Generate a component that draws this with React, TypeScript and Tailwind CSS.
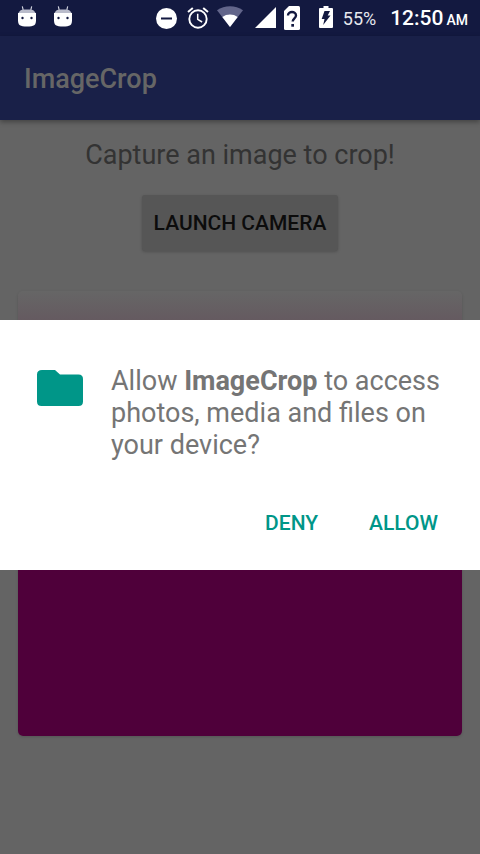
import React from "react";

function AndroidHead() {
  return (
    <svg width="18" height="21" viewBox="0 0 18 21" aria-hidden="true">
      <path d="M4.3 0.3 5.2 4M13.7 0.3 12.8 4" stroke="#d6d8e2" strokeWidth="1.1" fill="none" />
      <path d="M0 7h18v7.5c0 4.5-2 6-9 6s-9-1.500-9-6z" fill="#fff" />
      <path d="M0.500 7C1.500 4.500 3.500 3.500 6 3.500h6c2.500 0 4.500 1 5.500 3.500z" fill="#babccb" />
      <circle cx="4.500" cy="12" r="1.200" fill="#131940" />
      <circle cx="13.500" cy="12" r="1.200" fill="#131940" />
    </svg>
  );
}

function DoNotDisturb() {
  return (
    <svg width="21" height="21" viewBox="0 0 21 21" aria-hidden="true">
      <circle cx="10.500" cy="10.500" r="10.500" fill="#fff" />
      <rect x="5" y="9.500" width="11" height="2" fill="#131940" />
    </svg>
  );
}

function Alarm() {
  return (
    <svg width="22" height="22" viewBox="0 0 22 22" fill="none" stroke="#fff" aria-hidden="true">
      <circle cx="11" cy="12" r="8.700" strokeWidth="1.900" />
      <path d="M10.700 6.700v5.600l4.400 2.700" strokeWidth="1.500" />
      <path d="M1 5 5.800 1M21 5 16.200 1" strokeWidth="2" />
    </svg>
  );
}

function Wifi() {
  return (
    <svg width="26" height="22" viewBox="0 0 26 22" aria-hidden="true">
      <path d="M13 21 0 4.300C7.500-1.100 18.500-1.100 26 4.300z" fill="#62658a" />
      <path d="M13 21 5.300 11C10 7.700 16 7.700 20.700 11z" fill="#fff" />
    </svg>
  );
}

function Signal() {
  return (
    <svg width="21" height="21" viewBox="0 0 21 21" aria-hidden="true">
      <path d="M21 0v21H0z" fill="#fff" />
    </svg>
  );
}

function UnknownSim() {
  return (
    <svg width="16" height="24" viewBox="0 0 16 24" aria-hidden="true">
      <path d="M5 0h9.500Q16 0 16 1.500v21q0 1.500-1.500 1.500h-13Q0 24 0 22.500V5z" fill="#fff" />
      <path
        d="M4 9.500C4 4.800 12 4.800 12 9.500c0 2.800-3.300 2.900-3.300 6"
        fill="none"
        stroke="#131940"
        strokeWidth="2.400"
      />
      <rect x="7.300" y="18" width="2.700" height="2.700" fill="#131940" />
    </svg>
  );
}

function BatteryCharging() {
  return (
    <svg width="14" height="22" viewBox="0 0 14 22" aria-hidden="true">
      <path d="M4.500 0h5v2H13q1 0 1 1v18q0 1-1 1H1q-1 0-1-1V3q0-1 1-1h3.500z" fill="#fff" />
      <path d="M5.500 5H11L8.700 9.500h2.800L4.200 19l1.300-6H2.700z" fill="#131940" />
    </svg>
  );
}

function Folder() {
  return (
    <svg className="shrink-0" width="46" height="36" viewBox="0 0 46 36" aria-hidden="true">
      <path
        d="M5 0h13l5 4.500h18.500Q46 4.500 46 9v22.500Q46 36 41.500 36h-37Q0 36 0 31.500v-27Q0 0 5 0z"
        fill="#009688"
      />
    </svg>
  );
}

function StatusBar() {
  return (
    <div className="flex h-9 items-center bg-[#131940] pr-3 pl-[18px] text-white">
      <div className="flex gap-[18px] pb-1">
        <AndroidHead />
        <AndroidHead />
      </div>
      <div className="ml-auto flex items-center">
        <div className="flex items-center gap-2.5">
          <DoNotDisturb />
          <Alarm />
        </div>
        <div className="ml-2 flex items-center gap-3 pb-0.5">
          <Wifi />
          <Signal />
        </div>
        <div className="ml-2 flex items-center">
          <UnknownSim />
        </div>
        <div className="ml-[19px] flex items-center pb-0.5">
          <BatteryCharging />
        </div>
        <span className="ml-2.5 pt-0.5 text-[18px] leading-6 text-[#e7e8ee]">55%</span>
        <span className="ml-3.5 flex items-baseline gap-[3px] pt-0.5 text-[21px] leading-6 font-medium">
          12:50 <span className="text-[14px]">AM</span>
        </span>
      </div>
    </div>
  );
}

export default function App() {
  return (
    <div className="relative flex min-h-screen flex-col bg-[#646464] font-['Roboto','Liberation_Sans',sans-serif]">
      <StatusBar />
      <header className="z-10 flex h-21 items-center bg-[#192048] px-6 shadow-[0_2px_5px_rgba(0,0,0,0.35)]">
        <h1 className="pt-0.5 text-[27px] leading-8 font-medium text-[#666666]">ImageCrop</h1>
      </header>
      <main className="flex flex-col items-center px-[18px] pt-[19px]">
        <p className="text-[27px] leading-8 text-[#333333]">Capture an image to crop!</p>
        <button
          type="button"
          className="mt-6 h-14 rounded-[3px] bg-[#565656] px-3 text-[21px] leading-6 font-medium text-[#0c0c0c] shadow-[0_1px_3px_rgba(0,0,0,0.2)]"
        >
          LAUNCH CAMERA
        </button>
        <div className="mt-10 h-[445px] w-full rounded-[5px] bg-linear-to-b from-[#666666] to-[#4f003a] to-[220px] shadow-[0_1px_3px_rgba(0,0,0,0.15)]" />
      </main>
      <div className="absolute inset-x-0 top-9 bottom-0 z-20 flex items-center">
        <section
          role="dialog"
          aria-modal="true"
          aria-labelledby="permission-message"
          className="w-full bg-white pt-[45px] pb-5"
        >
          <div className="flex items-start gap-7 px-[37px]">
            <div className="pt-[5px]">
              <Folder />
            </div>
            <p id="permission-message" className="-mr-4 text-[27px] leading-8 text-[#757575]">
              Allow <strong className="font-bold">ImageCrop</strong> to access photos, media and files on your device?
            </p>
          </div>
          <div className="mt-[35px] flex justify-end gap-[27px] px-[30px] text-[21px] leading-6 font-medium text-[#009688]">
            <button type="button" className="h-[54px] px-3">
              DENY
            </button>
            <button type="button" className="h-[54px] px-3">
              ALLOW
            </button>
          </div>
        </section>
      </div>
    </div>
  );
}
